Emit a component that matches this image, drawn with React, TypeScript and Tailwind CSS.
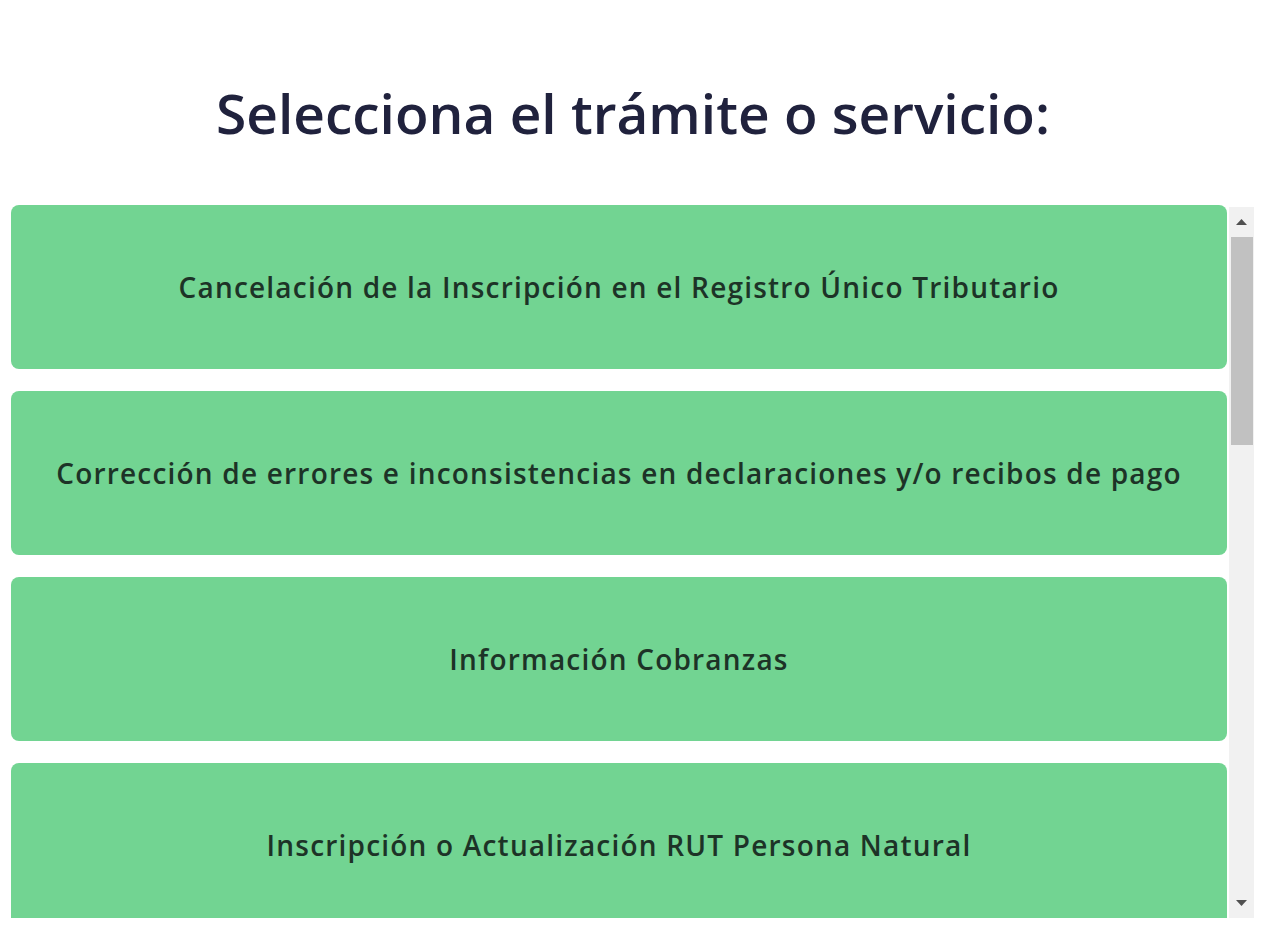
import React from "react";

const items = [
  "Cancelación de la Inscripción en el Registro Único Tributario",
  "Corrección de errores e inconsistencias en declaraciones y/o recibos de pago",
  "Información Cobranzas",
  "Inscripción o Actualización RUT Persona Natural",
];

export default function App() {
  return (
    <div className="w-[1280px] h-[945px] bg-white overflow-hidden" style={{ fontFamily: '"Open Sans", sans-serif' }}>
      <h1 className="pt-[80px] pr-[14px] h-[205px] text-center text-[55px] leading-[66px] font-semibold text-[#20223d]">
        Selecciona el trámite o servicio:
      </h1>
      <div className="flex h-[713px] pl-[11px] pr-[26px]">
        <div className="flex-1 overflow-hidden flex flex-col gap-[22px]">
          {items.map((t) => (
            <div
              key={t}
              className="shrink-0 h-[164px] rounded-[8px] bg-[#72d492] flex items-center justify-center text-[28px] tracking-[1.2px] font-semibold text-[#1d3327]"
            >
              {t}
            </div>
          ))}
        </div>
        <div className="w-[25px] ml-[2px] mt-[2px] bg-[#f1f1f1] flex flex-col items-center">
          <div className="h-[30px] flex items-center justify-center">
            <svg width="11" height="6" viewBox="0 0 11 6"><path d="M0 6 L5.5 0 L11 6 Z" fill="#505050" /></svg>
          </div>
          <div className="w-[22px] h-[208px] bg-[#c1c1c1]" />
          <div className="flex-1" />
          <div className="h-[30px] flex items-center justify-center">
            <svg width="11" height="6" viewBox="0 0 11 6"><path d="M0 0 L11 0 L5.5 6 Z" fill="#505050" /></svg>
          </div>
        </div>
      </div>
    </div>
  );
}
